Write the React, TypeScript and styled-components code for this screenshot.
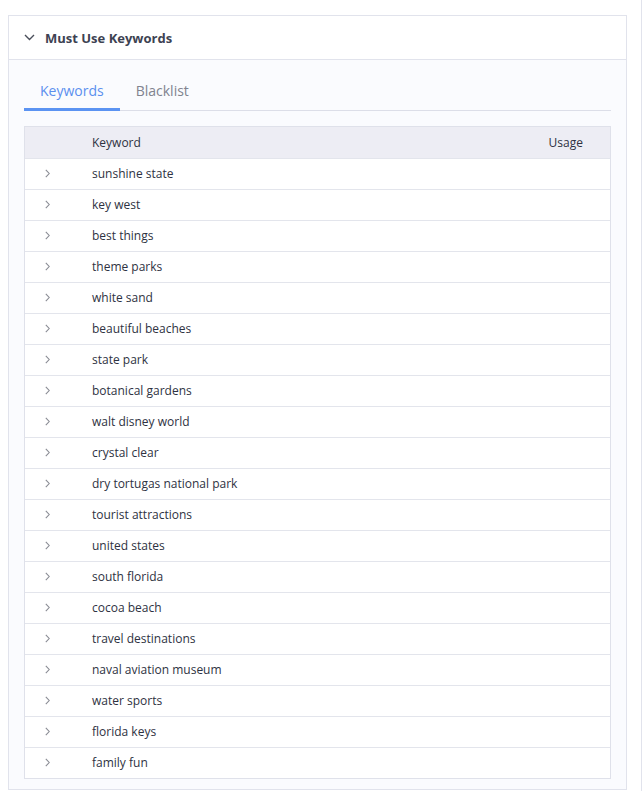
import React, { useState } from "react";
import styled, { createGlobalStyle } from "styled-components";

const GlobalStyle = createGlobalStyle`
  html, body { margin: 0; padding: 0; background: #ffffff; }
  body { font-family: "Open Sans", "Liberation Sans", sans-serif; -webkit-font-smoothing: antialiased; }
  * { box-sizing: border-box; }
`;

const Page = styled.div`
  width: 643px;
  min-height: 791px;
  padding: 15px 0 0 8px;
  position: relative;
  &::after {
    content: "";
    position: absolute;
    top: 0;
    bottom: 0;
    left: 641px;
    width: 1px;
    background: #e1e3ec;
  }
`;

const Panel = styled.section`
  width: 619px;
  border: 1px solid #e1e3ec;
  background: #fafbfe;
`;

const PanelHeader = styled.button`
  display: flex;
  align-items: center;
  gap: 10px;
  width: 100%;
  height: 44px;
  padding: 0 0 0 15px;
  border: none;
  border-bottom: 1px solid #e1e3ec;
  background: #ffffff;
  font-family: inherit;
  font-size: 13px;
  font-weight: 700;
  color: #3d4252;
  cursor: pointer;
  text-align: left;
`;

const PanelBody = styled.div`
  padding: 0 15px 10px 15px;
`;

const TabList = styled.div`
  display: flex;
  border-bottom: 1px solid #dcdee8;
`;

const Tab = styled.button<{ $active?: boolean }>`
  padding: 21px 16px 7px;
  margin-bottom: -1px;
  border: none;
  border-bottom: 3px solid ${(p) => (p.$active ? "#5b93f2" : "transparent")};
  background: transparent;
  font-family: inherit;
  font-size: 14px;
  line-height: 20px;
  color: ${(p) => (p.$active ? "#5b8fee" : "#80838f")};
  cursor: pointer;
`;

const Table = styled.div`
  margin-top: 15px;
  border: 1px solid #dfe1ea;
  background: #ffffff;
`;

const Row = styled.div<{ $head?: boolean }>`
  display: grid;
  grid-template-columns: 67px 1fr auto;
  align-items: center;
  height: 31px;
  padding: 0 27px 1px 0;
  background: ${(p) => (p.$head ? "#ededf4" : "#ffffff")};
  border-top: ${(p) => (p.$head ? "none" : "1px solid #e3e5ec")};
  font-size: 12px;
  color: #2e3242;
`;

const Toggle = styled.span`
  display: flex;
  justify-content: flex-start;
  padding-left: 20px;
  color: #8a8c94;
`;

const Cell = styled.span`
  white-space: nowrap;
`;

const Chevron = ({ dir }: { dir: "down" | "right" }) =>
  dir === "down" ? (
    <svg width="11" height="7" viewBox="0 0 11 7" fill="none">
      <path d="M1 1l4.5 4.5L10 1" stroke="#4a4e5a" strokeWidth="1.4" />
    </svg>
  ) : (
    <svg width="5" height="9" viewBox="0 0 5 9" fill="none">
      <path d="M0.8 0.8l3.4 3.7L0.8 8.2" stroke="#8a8c94" strokeWidth="1.1" />
    </svg>
  );

const keywords = [
  "sunshine state",
  "key west",
  "best things",
  "theme parks",
  "white sand",
  "beautiful beaches",
  "state park",
  "botanical gardens",
  "walt disney world",
  "crystal clear",
  "dry tortugas national park",
  "tourist attractions",
  "united states",
  "south florida",
  "cocoa beach",
  "travel destinations",
  "naval aviation museum",
  "water sports",
  "florida keys",
  "family fun",
];

export default function App() {
  const [tab, setTab] = useState<"kw" | "bl">("kw");
  return (
    <>
      <GlobalStyle />
      <Page>
        <Panel>
          <PanelHeader>
            <Chevron dir="down" />
            Must Use Keywords
          </PanelHeader>
          <PanelBody>
            <TabList>
              <Tab $active={tab === "kw"} onClick={() => setTab("kw")}>
                Keywords
              </Tab>
              <Tab $active={tab === "bl"} onClick={() => setTab("bl")}>
                Blacklist
              </Tab>
            </TabList>
            <Table>
              <Row $head>
                <span />
                <Cell>Keyword</Cell>
                <Cell>Usage</Cell>
              </Row>
              {keywords.map((k) => (
                <Row key={k}>
                  <Toggle>
                    <Chevron dir="right" />
                  </Toggle>
                  <Cell>{k}</Cell>
                  <Cell />
                </Row>
              ))}
            </Table>
          </PanelBody>
        </Panel>
      </Page>
    </>
  );
}
